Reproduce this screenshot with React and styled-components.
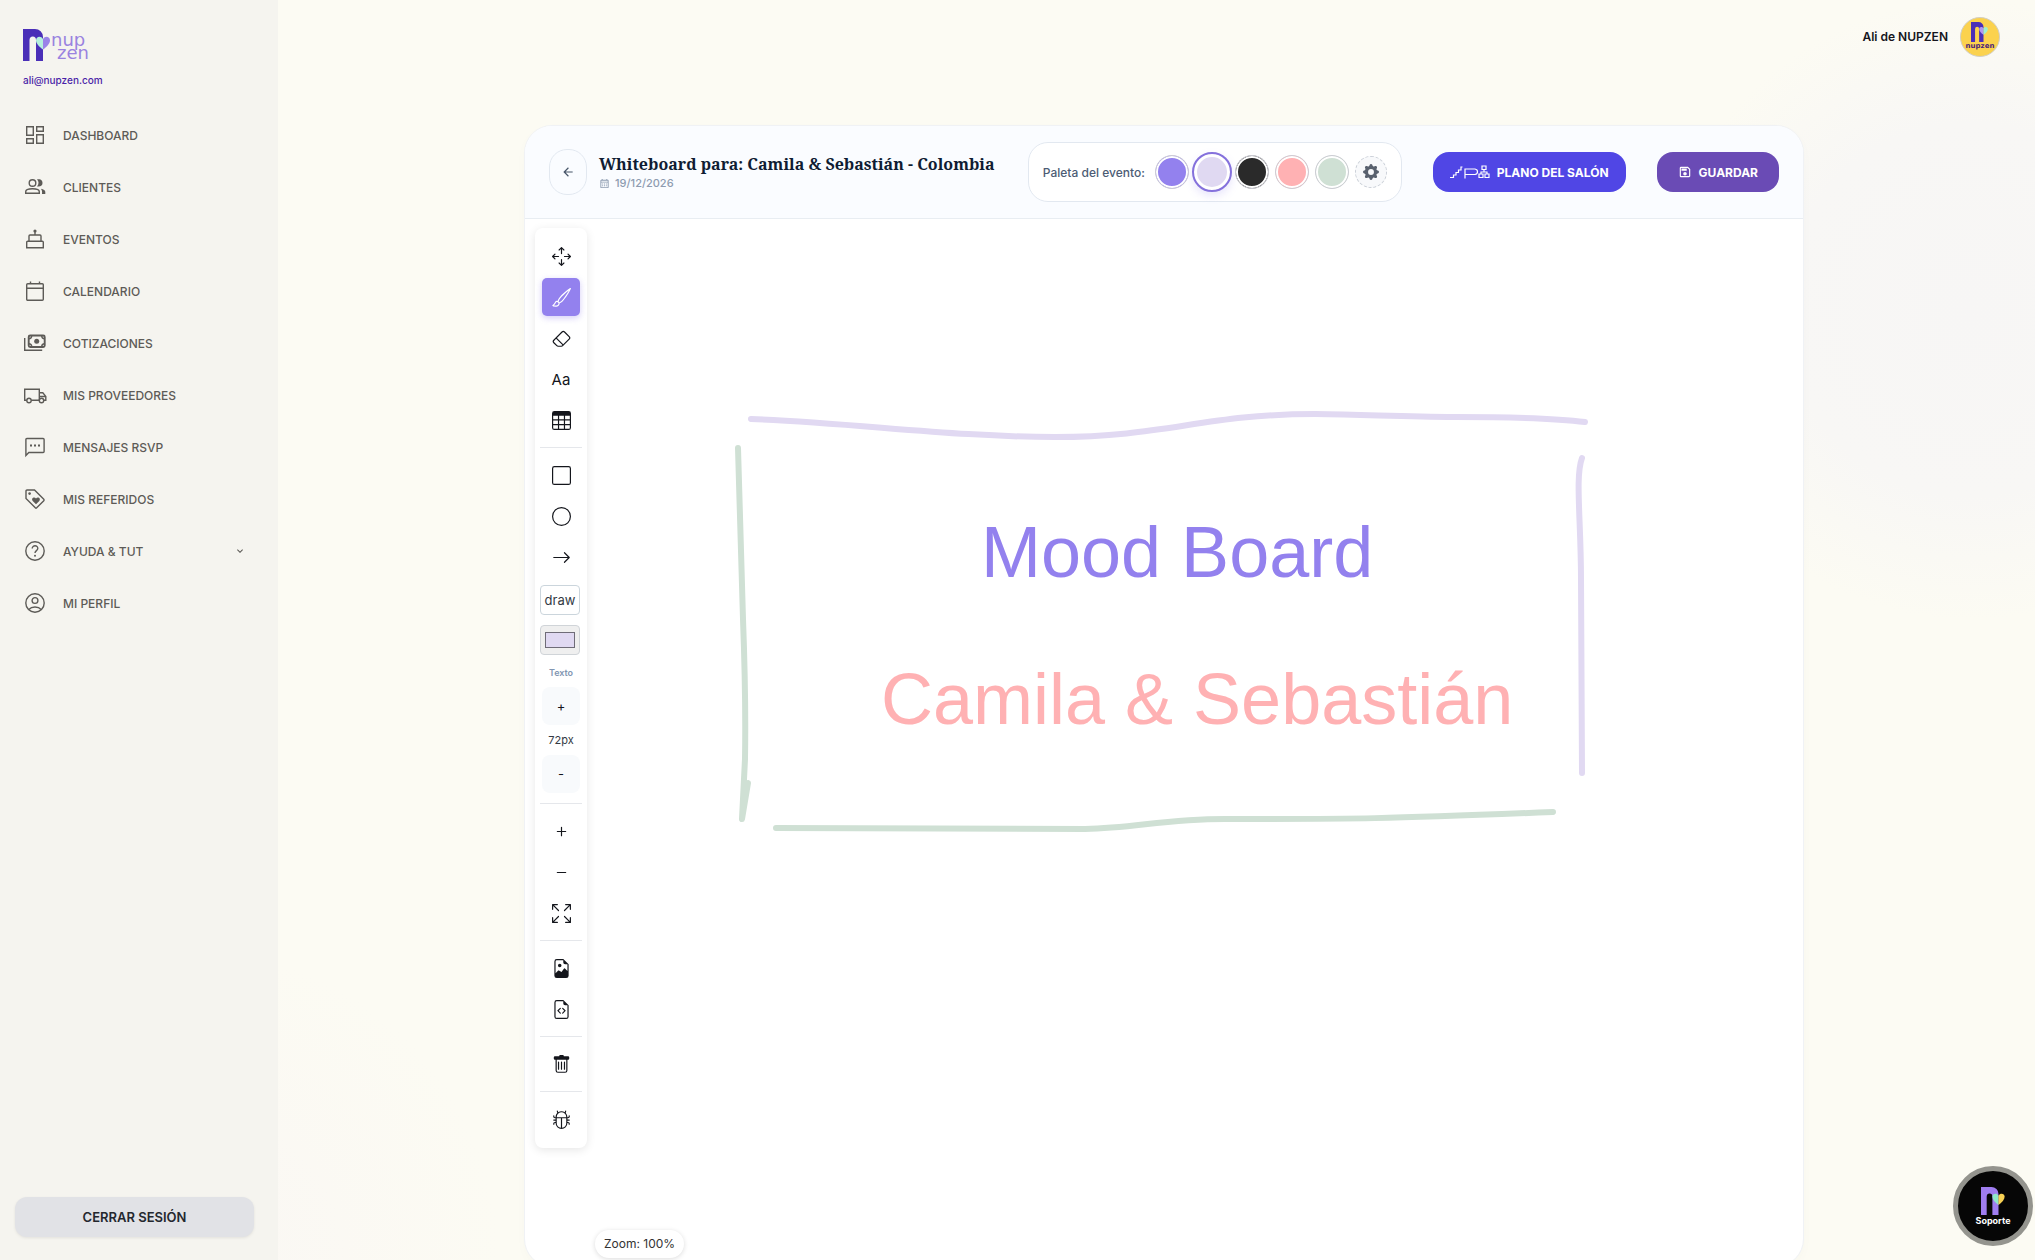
import React from 'react'
import styled, { createGlobalStyle, css } from 'styled-components'
import { MdKeyboardArrowDown, MdArrowBack, MdOutlineCalendarMonth, MdOutlineSave } from 'react-icons/md'
import {
  BsArrowsMove,
  BsBrush,
  BsEraser,
  BsTable,
  BsSquare,
  BsCircle,
  BsArrowRight,
  BsPlus,
  BsDash,
  BsArrowsFullscreen,
  BsFileEarmarkImage,
  BsFileEarmarkCode,
  BsBug,
  BsGearFill,
} from 'react-icons/bs'

const menu = [
  {
    label: 'DASHBOARD',
    icon: <path d="M3.700 3.700h6.600v8.600H3.700zM13.700 3.700h6.600v4.600h-6.600zM13.700 11.700h6.600v8.600h-6.600zM3.700 15.700h6.600v4.600H3.700z" />,
  },
  {
    label: 'CLIENTES',
    icon: (
      <>
        <circle cx="9.500" cy="8" r="3.300" />
        <path d="M2.700 18.300v-1.500c0-4 13.600-4 13.600 0v1.500z" />
        <path
          d="M14 4.300c4.500-.6 5.500 1.500 5.500 3.700s-1.500 4-5.500 3.500c2-2 2-5.200 0-7.200zM18 13.800c2.500.6 4.300 1.500 4.300 3.200v2H19c.3-2.200 0-3.700-1-5.200z"
          fill="currentColor"
          stroke="none"
        />
      </>
    ),
  },
  {
    label: 'EVENTOS',
    icon: (
      <>
        <path d="M3.700 20.800v-5.600a1 1 0 0 1 1-1h14.600a1 1 0 0 1 1 1v5.600zM6 14V9a1 1 0 0 1 1-1h10a1 1 0 0 1 1 1v5M12 8V4" />
        <circle cx="12" cy="4" r="1.600" fill="currentColor" stroke="none" />
      </>
    ),
  },
  {
    label: 'CALENDARIO',
    icon: <path d="M4.700 4.800h14.600a1 1 0 0 1 1 1v14.500a1 1 0 0 1-1 1H4.700a1 1 0 0 1-1-1V5.800a1 1 0 0 1 1-1zM3.700 9.300h16.600M7.500 2.500v2.500M16.500 2.500v2.500" />,
  },
  {
    label: 'COTIZACIONES',
    icon: (
      <>
        <rect x="5.700" y="4.500" width="16" height="11.500" rx="1.500" strokeWidth="1.900" />
        <path d="M5.700 7.700q3 0 3-3M21.700 7.700q-3 0-3-3M5.700 12.800q3 0 3 3M21.700 12.800q-3 0-3 3M1.700 7v12.200h17.500" />
        <circle cx="13.700" cy="10.200" r="2.500" fill="currentColor" stroke="none" />
      </>
    ),
  },
  {
    label: 'MIS PROVEEDORES',
    icon: (
      <>
        <path d="M3.700 17.200H1.700V6.200h14.600v11H8.300M16.300 9.700h3.500l3 3.700v3.800h-2M16.300 13.500h6.300" />
        <circle cx="6" cy="17.500" r="2.200" />
        <circle cx="18.500" cy="17.500" r="2.200" />
      </>
    ),
  },
  {
    label: 'MENSAJES RSVP',
    icon: (
      <>
        <path d="M2.900 20.500V4.500a1 1 0 0 1 1-1h16.200a1 1 0 0 1 1 1v12a1 1 0 0 1-1 1H5.800z" />
        <path d="M7 10.500h2M11 10.500h2M15 10.500h2" strokeWidth="1.900" />
      </>
    ),
  },
  {
    label: 'MIS REFERIDOS',
    icon: (
      <>
        <path d="M3 4a1 1 0 0 1 1-1h7.500l9.300 9.300a1 1 0 0 1 0 1.400l-7.100 7.100a1 1 0 0 1-1.400 0L3 11.500z" />
        <circle cx="6.600" cy="6.600" r="1.300" fill="currentColor" stroke="none" />
        <path
          d="M13 17.200l-3.300-3.300c-2-2.400 1.500-4.700 3.300-2.400 1.800-2.300 5.300 0 3.300 2.400z"
          fill="currentColor"
          stroke="none"
        />
      </>
    ),
  },
  {
    label: 'AYUDA & TUT',
    more: true,
    icon: (
      <>
        <circle cx="12" cy="12" r="9.200" />
        <path d="M9.200 9.500c0-3.700 5.800-3.500 5.600 0-.1 2-2.800 2.300-2.800 4.500" />
        <circle cx="12" cy="16.800" r="1" fill="currentColor" stroke="none" />
      </>
    ),
  },
  {
    label: 'MI PERFIL',
    icon: (
      <>
        <circle cx="12" cy="12" r="9.200" />
        <circle cx="12" cy="9.500" r="2.900" />
        <path d="M5.800 18.500c3-3.400 9.400-3.400 12.400 0" />
      </>
    ),
  },
]

const palette = ['#9381ee', '#e0d9f2', '#2a2a2a', '#ffb1b3', '#cfe0d4']

function TrashIcon() {
  return (
    <svg viewBox="0 0 16 16" fill="currentColor">
      <path d="M5.500 5.500A.5.500 0 0 1 6 6v6a.5.500 0 0 1-1 0V6a.5.500 0 0 1 .5-.5m2.500 0a.5.500 0 0 1 .5.500v6a.5.500 0 0 1-1 0V6a.5.500 0 0 1 .5-.5m3 .5a.5.500 0 0 0-1 0v6a.5.500 0 0 0 1 0z" />
      <path d="M14.500 3a1 1 0 0 1-1 1H13v9a2 2 0 0 1-2 2H5a2 2 0 0 1-2-2V4h-.5a1 1 0 0 1-1-1V2a1 1 0 0 1 1-1H6a1 1 0 0 1 1-1h2a1 1 0 0 1 1 1h3.500a1 1 0 0 1 1 1zM4 4v9a1 1 0 0 0 1 1h6a1 1 0 0 0 1-1V4z" />
    </svg>
  )
}

function PlanIcon() {
  return (
    <svg width="40" height="14" viewBox="0 0 40 14" fill="none" stroke="currentColor" strokeWidth="1.200">
      <path d="M0 12.500h3.500V10H6V7.500h2.500V5H11V2h1.500M15 13.500V4h10q2.500.4 2.500 2.700T25 9.500H15" />
      <path d="M32 1h4v3.500h-4zM29 9h4v3.500h-4zM35 9h4v3.500h-4zM34 4.500V7M31 9V7h6v2" />
    </svg>
  )
}

// isotipo: la "n" con el corazón partido
function LogoMark({ body, left, right, height }) {
  return (
    <svg height={height} viewBox="0 0 28 32">
      <path fill={body} d="M0 0h12a8 8 0 0 1 8 8v24h-7V11q0-3.500-3.200-3.500T6.500 11v21H0z" />
      <path fill={left} d="M20 20.500c-4-3-7-6-7-9.300C13 7.500 18 6.500 20 10z" />
      <path fill={right} d="M20 20.500c4-3 7-6 7-9.300C27 7.500 22 6.500 20 10z" />
    </svg>
  )
}

function Sidebar() {
  return (
    <Side>
      <Brand>
        <LogoMark body="#4a2fb8" left="#b4f0dc" right="#9a83e8" height="32" />
        <BrandText>
          <span>nup</span>
          <span>zen</span>
        </BrandText>
      </Brand>
      <Email href="mailto:ali@nupzen.com">ali@nupzen.com</Email>
      <Nav>
        {menu.map(({ label, icon, more }) => (
          <NavLink href="#" key={label}>
            <NavIcon viewBox="0 0 24 24">{icon}</NavIcon>
            <span>{label}</span>
            {more && <More />}
          </NavLink>
        ))}
      </Nav>
      <Logout type="button">CERRAR SESIÓN</Logout>
    </Side>
  )
}

function Toolbar() {
  return (
    <Tools>
      <Tool aria-label="Mover"><BsArrowsMove /></Tool>
      <Tool aria-label="Pincel" $active><BsBrush /></Tool>
      <Tool aria-label="Borrador"><BsEraser /></Tool>
      <Tool aria-label="Texto">Aa</Tool>
      <Tool aria-label="Tabla"><BsTable /></Tool>
      <Divider />
      <Tool aria-label="Rectángulo"><BsSquare /></Tool>
      <Tool aria-label="Círculo"><BsCircle /></Tool>
      <Tool aria-label="Flecha"><BsArrowRight /></Tool>
      <ModeSelect aria-label="Modo" defaultValue="draw">
        <option value="draw">draw</option>
      </ModeSelect>
      <ColorInput type="color" aria-label="Color" defaultValue="#e0d9f2" />
      <SizeGroup>
        <SizeLabel>Texto</SizeLabel>
        <Tool aria-label="Aumentar texto" $soft>+</Tool>
        <SizeValue>72px</SizeValue>
        <Tool aria-label="Reducir texto" $soft>-</Tool>
      </SizeGroup>
      <Divider />
      <Tool aria-label="Acercar"><BsPlus /></Tool>
      <Tool aria-label="Alejar"><BsDash /></Tool>
      <Tool aria-label="Ajustar"><BsArrowsFullscreen /></Tool>
      <Divider />
      <Tool aria-label="Exportar imagen"><BsFileEarmarkImage /></Tool>
      <Tool aria-label="Exportar SVG"><BsFileEarmarkCode /></Tool>
      <Divider />
      <Tool aria-label="Vaciar"><TrashIcon /></Tool>
      <Divider />
      <Tool aria-label="Depurar"><BsBug /></Tool>
    </Tools>
  )
}

function App() {
  return (
    <Page>
      <GlobalStyle />
      <Sidebar />
      <Main>
        <TopBar>
          <span>Ali de NUPZEN</span>
          <Avatar>
            <LogoMark body="#4a2fb8" left="#b497f0" right="#9ff0d0" height="20" />
            <small>nupzen</small>
          </Avatar>
        </TopBar>
        <Card>
          <Header>
            <Back type="button" aria-label="Volver">
              <MdArrowBack />
            </Back>
            <Heading>
              <h1>Whiteboard para: Camila & Sebastián - Colombia</h1>
              <time dateTime="2026-12-19">
                <MdOutlineCalendarMonth />
                19/12/2026
              </time>
            </Heading>
            <Palette>
              <span>Paleta del evento:</span>
              <Swatches>
                {palette.map((color, i) => (
                  <Swatch type="button" key={color} aria-label={color} $color={color} $selected={i === 1} />
                ))}
                <Gear type="button" aria-label="Configurar paleta">
                  <BsGearFill />
                </Gear>
              </Swatches>
            </Palette>
            <Action type="button" $bg="#5046e5">
              <PlanIcon />
              PLANO DEL SALÓN
            </Action>
            <Action type="button" $bg="#6a4bb5" $wide>
              <MdOutlineSave />
              GUARDAR
            </Action>
          </Header>
          <Board>
            <Drawing>
              <path stroke="#e1d9f2" d="M226 200C330 204 430 218 530 218C640 218 680 195 790 195C850 196 880 198 930 198S1030 199 1060 203" />
              <path stroke="#e1d9f2" d="M1057 239C1050 258 1056 300 1056 360L1057 554" />
              <path stroke="#cfe0d4" d="M213 229L218 400Q221 480 220 540L217 600L223 564" />
              <path stroke="#cfe0d4" d="M251 609L560 610C610 609 640 600 700 600C830 600 860 600 1028 593" />
              <text x="456" y="358" fill="#9381ee">Mood Board</text>
              <text x="356" y="505" fill="#ffb1b3">Camila & Sebastián</text>
            </Drawing>
            <Toolbar />
            <Zoom>Zoom: 100%</Zoom>
          </Board>
        </Card>
      </Main>
      <Support type="button">
        <LogoMark body="#9f7df0" left="#8ee8c8" right="#f7d154" height="28" />
        Soporte
      </Support>
    </Page>
  )
}

export default App

const GlobalStyle = createGlobalStyle`
  * {
    box-sizing: border-box;
  }
  body {
    margin: 0;
    font-family: Inter, 'Liberation Sans', sans-serif;
    background-color: #fcfbf3;
  }
  button, select, input {
    font-family: inherit;
    padding: 0;
    border: none;
    cursor: pointer;
  }
  a {
    text-decoration: none;
  }
`

const Page = styled.div`
  display: flex;
  height: 100vh;
  overflow: hidden;
  background-image: radial-gradient(circle 310px at right 65px top 310px, #f7f6f5 0%, #f8f7f5 60%, rgba(250, 247, 244, 0) 100%),
    radial-gradient(circle 310px at 190px bottom, #faf7f4 0%, rgba(250, 247, 244, 0) 100%);
`

const Side = styled.aside`
  display: flex;
  flex-direction: column;
  flex: none;
  width: 278px;
  padding: 29px 24px 23px 15px;
  background-color: #f5f4ef;
`

const Brand = styled.div`
  display: flex;
  padding-left: 8px;
`

const BrandText = styled.div`
  display: flex;
  flex-direction: column;
  color: #9a83e0;
  font-family: 'DejaVu Sans', sans-serif;
  font-size: 18px;
  line-height: 13px;
  padding-top: 4px;
  span + span {
    padding-left: 6px;
  }
`

const Email = styled.a`
  padding-left: 8px;
  margin-top: 11px;
  color: #4a1fa8;
  font-size: 10px;
  font-weight: 500;
  line-height: 16px;
`

const Nav = styled.nav`
  display: flex;
  flex-direction: column;
  flex: 1;
  margin-top: 21px;
`

const NavLink = styled.a`
  display: flex;
  align-items: center;
  gap: 16px;
  height: 52px;
  padding: 0 8px;
  color: #5d5b57;
  font-size: 12px;
  font-weight: 500;
`

const NavIcon = styled.svg`
  width: 24px;
  height: 24px;
  fill: none;
  stroke: currentColor;
  stroke-width: 1.4;
`

const More = styled(MdKeyboardArrowDown)`
  width: 12px;
  height: 12px;
  margin-left: auto;
`

const Logout = styled.button`
  height: 40px;
  border-radius: 12px;
  background-color: #e1e2e6;
  box-shadow: 0 1px 3px rgba(0, 0, 0, 0.08);
  color: #24272e;
  font-size: 13px;
  font-weight: 600;
`

const Main = styled.main`
  display: flex;
  flex-direction: column;
  flex: 1;
  align-items: center;
  min-width: 0;
  padding-left: 15px;
`

const TopBar = styled.header`
  display: flex;
  flex: none;
  align-items: center;
  justify-content: flex-end;
  gap: 12px;
  width: 100%;
  height: 73px;
  padding-right: 35px;
  margin-bottom: 52px;
  color: #15151c;
  font-size: 12px;
  font-weight: 600;
`

const Avatar = styled.div`
  display: flex;
  flex-direction: column;
  align-items: center;
  width: 40px;
  height: 40px;
  padding-top: 4px;
  border: 1px solid #d3cfc4;
  border-radius: 50%;
  background-color: #fbd24e;
  small {
    color: #4a2379;
    font-family: 'DejaVu Sans', sans-serif;
    font-size: 7px;
    font-weight: 700;
    line-height: 8px;
  }
`

const Card = styled.section`
  display: flex;
  flex: none;
  flex-direction: column;
  width: 100%;
  max-width: 1280px;
  height: calc(100vh - 118px);
  border: 1px solid #f0f2f5;
  border-radius: 28px;
  background-color: #fff;
  box-shadow: 0 4px 12px rgba(0, 0, 0, 0.02);
  overflow: hidden;
`

const Header = styled.div`
  display: flex;
  align-items: center;
  flex: none;
  height: 93px;
  padding: 0 24px;
  border-bottom: 1px solid #e8edf2;
  background-color: #fafcff;
`

const Back = styled.button`
  display: flex;
  align-items: center;
  justify-content: center;
  flex: none;
  width: 38px;
  height: 46px;
  border: 1px solid #e2e8f0;
  border-radius: 18px;
  background-color: transparent;
  color: #475569;
  font-size: 14px;
`

const Heading = styled.div`
  display: flex;
  flex-direction: column;
  flex: 1;
  margin-left: 12px;
  white-space: nowrap;
  h1 {
    margin: 0;
    color: #0f1c33;
    font-family: 'Noto Serif', 'Liberation Serif', serif;
    font-size: 16px;
    font-weight: 700;
    line-height: 22px;
  }
  time {
    display: flex;
    align-items: center;
    gap: 5px;
    color: #8d9bb0;
    font-size: 11px;
    font-weight: 500;
    line-height: 16px;
  }
`

const Palette = styled.div`
  display: flex;
  align-items: center;
  gap: 10px;
  height: 60px;
  padding: 0 14px;
  border: 1px solid #e2e8f0;
  border-radius: 20px;
  background-color: #fff;
  color: #4c5c74;
  font-size: 12px;
  font-weight: 500;
  white-space: nowrap;
`

const Swatches = styled.div`
  display: flex;
  align-items: center;
  gap: 6px;
`

const Swatch = styled.button`
  width: 34px;
  height: 34px;
  border: 1px solid #cdcdd4;
  border-radius: 50%;
  background-color: ${(props) => props.$color};
  box-shadow: inset 0 0 0 2px #fff;
  ${(props) =>
    props.$selected &&
    css`
      width: 40px;
      height: 40px;
      margin: 0 -3px;
      border: 2px solid #8571dc;
      box-shadow: inset 0 0 0 3px #fff, 0 4px 8px rgba(147, 129, 238, 0.2);
    `}
`

const Gear = styled.button`
  display: flex;
  align-items: center;
  justify-content: center;
  width: 32px;
  height: 32px;
  border: 1px dashed #cbd0d8;
  border-radius: 50%;
  background-color: #f8f9fb;
  color: #59616e;
  font-size: 16px;
`

const Action = styled.button`
  display: flex;
  align-items: center;
  justify-content: center;
  gap: 7px;
  height: 40px;
  padding: 0 ${(props) => (props.$wide ? 21 : 17)}px;
  margin-left: 31px;
  border-radius: 16px;
  background-color: ${(props) => props.$bg};
  color: #fff;
  font-size: 12px;
  font-weight: 700;
  white-space: nowrap;
  svg {
    flex: none;
    min-width: 14px;
    min-height: 14px;
  }
`

const Board = styled.div`
  position: relative;
  flex: 1;
  padding: 9px 10px;
`

// el lienzo ocupa todo el tablero, por debajo de la barra
const Drawing = styled.svg`
  position: absolute;
  inset: 0;
  width: 100%;
  height: 100%;
  path {
    fill: none;
    stroke-width: 6px;
    stroke-linecap: round;
    stroke-linejoin: round;
  }
  text {
    font-family: 'Liberation Sans', Arial, sans-serif;
    font-size: 72px;
  }
`

const Tools = styled.div`
  position: relative;
  display: flex;
  flex-direction: column;
  align-items: center;
  gap: 3px;
  width: 52px;
  padding: 9px 5px 10px;
  border-radius: 8px;
  background-color: #fff;
  box-shadow: 0 2px 10px rgba(0, 0, 0, 0.1);
`

const Tool = styled.button.attrs({ type: 'button' })`
  display: flex;
  align-items: center;
  justify-content: center;
  width: 38px;
  height: 38px;
  border-radius: ${(props) => (props.$soft ? 8 : 5)}px;
  background-color: ${(props) => (props.$active ? '#9381ee' : props.$soft ? '#f8fafc' : 'transparent')};
  box-shadow: ${(props) => (props.$active ? '0 2px 6px rgba(147, 129, 238, 0.4)' : 'none')};
  color: ${(props) => (props.$active ? '#fff' : '#14161c')};
  font-size: ${(props) => (props.$soft ? 13 : 15)}px;
  svg {
    width: 19px;
    height: 19px;
  }
`

const Divider = styled.hr`
  width: 42px;
  height: 1px;
  margin: 5px 0;
  border: none;
  background-color: #e5e7eb;
`

const ModeSelect = styled.select`
  width: 40px;
  height: 30px;
  margin: 6px 2px 0 0;
  border: 1px solid #cbd5dc;
  border-radius: 4px;
  background-color: #fff;
  appearance: none;
  color: #333a44;
  font-size: 13px;
  text-align: center;
`

const ColorInput = styled.input`
  width: 40px;
  height: 30px;
  margin: 7px 2px 0 0;
  padding: 5px 3px;
  border: 1px solid #d0d4d8;
  border-radius: 4px;
  background-color: #efefef;
  &::-webkit-color-swatch-wrapper {
    padding: 1px;
  }
  &::-webkit-color-swatch {
    border: 1px solid #6f6c78;
  }
`

const SizeGroup = styled.div`
  display: flex;
  flex-direction: column;
  align-items: center;
  padding-bottom: 2px;
`

const SizeLabel = styled.span`
  color: #8296b2;
  font-size: 9px;
  font-weight: 600;
  line-height: 29px;
`

const SizeValue = styled.span`
  color: #333a44;
  font-size: 11px;
  line-height: 30px;
`

const Zoom = styled.div`
  position: absolute;
  left: 70px;
  bottom: 8px;
  padding: 0 9px;
  border-radius: 14px;
  background-color: #fff;
  box-shadow: 0 1px 5px rgba(0, 0, 0, 0.14);
  color: #333;
  font-size: 12px;
  line-height: 28px;
`

const Support = styled.button`
  position: fixed;
  right: 2px;
  bottom: 14px;
  display: flex;
  flex-direction: column;
  align-items: center;
  justify-content: center;
  width: 80px;
  height: 80px;
  border: 5px solid #94948e;
  border-radius: 50%;
  background-color: #060606;
  color: #fff;
  font-size: 9px;
  font-weight: 700;
`
